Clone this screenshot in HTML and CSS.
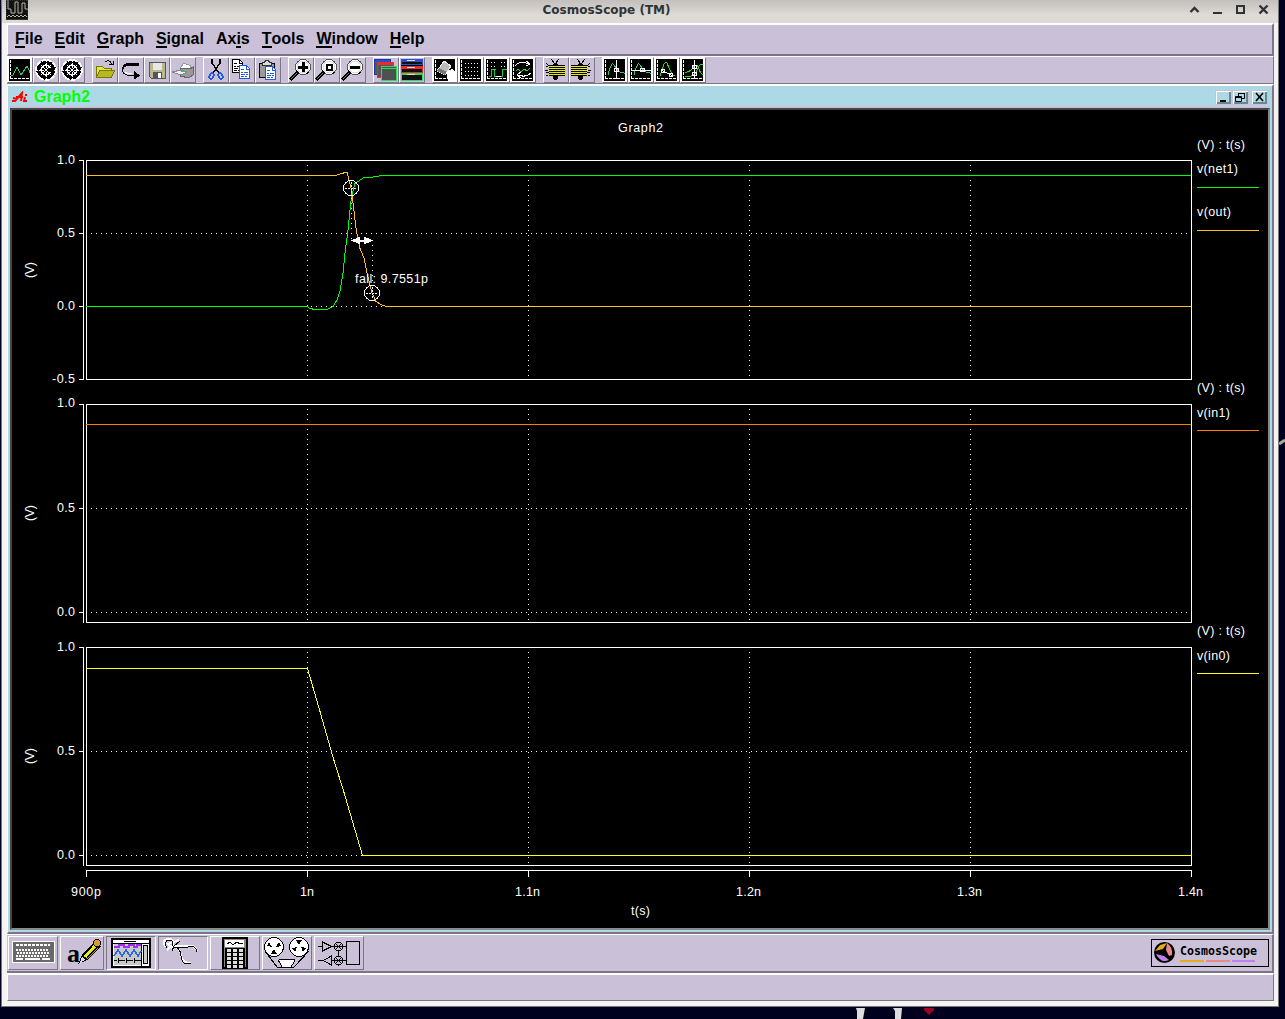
FILE: index.html
```html
<!DOCTYPE html>
<html lang="en">
<head>
<meta charset="utf-8">
<title>CosmosScope (TM)</title>
<link rel="stylesheet" href="styles.css">
</head>
<body>
<svg width="0" height="0" class="defs">
  <defs>
    <g id="scr"><path fill="#fff" d="M0 0h24v24H0z"/><path fill="#000" d="M1 1h21v22H1z"/><path d="M2.500 2v20M2 20.500h20" stroke="#fff" stroke-dasharray="3 1" fill="none"/></g>
    <g id="lens"><path d="M1 22L8 15" stroke="#000" stroke-width="3"/><path d="M2 21L8 15" stroke="#777"/><circle cx="14" cy="9" r="7.500" fill="#fff" stroke="#555"/><circle cx="14" cy="9" r="6" fill="none" stroke="#ddd"/><path d="M7 12l3 4M17 16l3-2" stroke="#000"/></g>
    <g id="bug" stroke="#000" fill="none"><path d="M7 1l4 5M15 1l-4 5M2 5l4 4M2 8h5M1 12h6M2 14h5M2 18l5-3M4 7l4 3"/><ellipse cx="11.500" cy="13.500" rx="3" ry="8" fill="#000"/><path d="M5 7h16v11H5z" fill="#000" stroke="none"/><path d="M4 8.500h17M5 10.500h16M4 12.500h17M5 14.500h16M4 16.500h17" stroke="#e8e820"/></g>
    <g id="polar"><circle cx="12" cy="12" r="10" fill="#000" stroke="#fff" stroke-width="2" stroke-dasharray="5 1"/><path d="M12 2v20M2 12h20M5 5l14 14M19 5L5 19" stroke="#fff" stroke-dasharray="2 1"/><circle cx="12" cy="12" r="5" fill="none" stroke="#fff" stroke-width="1.500"/></g>
    <g id="page"><path d="M.5.500h7l3 3v10H.5z" fill="#fff" stroke="currentColor"/><path d="M7.500 1v3h3M2 4.500h3M2 7.500h2m1 0h4M2 9.500h4m1 0h2M2 11.500h3m1 0h2" stroke="currentColor" fill="none"/></g>
    <g id="target" fill="none" stroke="#fff"><circle r="7.500"/><path d="M-6 .5H6M.5-6V6" stroke-dasharray="2 1"/></g>
  </defs>
</svg>
<div class="desktop">
<div class="window">
  <header class="titlebar">
    <svg class="appicon" width="22" height="20"><path d="M0 0h22v20H0z" fill="#111"/><path d="M2 0v9h3v4h4V2h3v11h4V3h3v6h3M1 17l2-2 2 2 2-2 2 2 2-2 2 2 2-2 2 2 2-2 2 2" fill="none" stroke="#b5b5a8" stroke-width="1"/><path d="M0 0h22v19.500H0z" fill="none" stroke="#555" stroke-dasharray="1 1"/></svg>
    <span class="caption">CosmosScope (TM)</span>
    <svg class="controls" width="84" height="20" fill="none" stroke="#2e3436" stroke-width="2"><path d="M5.500 12l4-4 4 4" stroke-width="2.400"/><path d="M28 13h9M52 6h7v7h-7z"/><path d="M74.500 5.500l8 8m0-8l-8 8" stroke-width="2.400"/></svg>
  </header>
  <div class="panels">
    <nav class="menubar"><span><u>F</u>ile</span><span><u>E</u>dit</span><span><u>G</u>raph</span><span><u>S</u>ignal</span><span>Ax<u>i</u>s</span><span><u>T</u>ools</span><span><u>W</u>indow</span><span><u>H</u>elp</span></nav>
    <div class="toolbar">
      <div class="group">
        <button><svg viewBox="0 0 24 24"><use href="#scr"/><path d="M3 17h2l4-8 4 8 4-6 2-3 2 4v3" fill="none" stroke="#30d060"/></svg></button>
        <button><svg viewBox="0 0 24 24"><use href="#polar"/><path d="M12 12l8-4v7z"/></svg></button>
        <button><svg viewBox="0 0 24 24"><use href="#polar"/></svg></button>
      </div>
      <div class="group">
        <button><svg viewBox="0 0 24 24"><path d="M12 4q4-3 7 2m-3 0h4V3" stroke="#000" fill="none"/><path d="M3.500 19.500v-11h6l2 2h7v3" fill="#e5e548" stroke="#777700"/><path d="M3.500 19.500l3-7h15l-3 7z" fill="#b8b820" stroke="#777700"/></svg></button>
        <button><svg viewBox="0 0 24 24"><path d="M20 6.500H9Q3.500 7 3.500 11.500q0 5.500 7 6h8" fill="none" stroke="#000"/><path d="M8 5h12v3H8Q5 9 4 12 2 7 8 5zM15 13l6 4.500-6 4z" fill="#000"/><path d="M6 14q2 2 7 2" stroke="#fff" fill="none"/></svg></button>
        <button><svg viewBox="0 0 24 24"><path d="M4.500 4.500h16v16H6.500l-2-2z" fill="#b8b890" stroke="#555"/><path d="M8 5h9v7H8z" fill="#e7e7e7"/><path d="M8 14h9v6H8z" fill="#555"/><path d="M13 15h3v5h-3z" fill="#fff"/></svg></button>
        <button><svg viewBox="0 0 24 24"><path d="M9 10l4-5 7 3-1 4" fill="#fff" stroke="#999"/><path d="M9 10l10 1 3-2v8l-4 3-9-2z" fill="#999" stroke="#666"/><path d="M1 14l9-2 6 2-6 3z" fill="#eee" stroke="#888"/><path d="M10 13h4" stroke="#20c080"/></svg></button>
      </div>
      <div class="group">
        <button><svg viewBox="0 0 24 24" fill="none"><path d="M8 1v4l7 10M16 1v4L9 15" stroke="#000" stroke-width="1.500"/><g stroke="#2058e0" stroke-width="1.800"><ellipse cx="7.500" cy="18" rx="2" ry="3" transform="rotate(30 7.500 18)"/><ellipse cx="16.500" cy="18" rx="2" ry="3" transform="rotate(-30 16.500 18)"/></g></svg></button>
        <button><svg viewBox="0 0 24 24"><use href="#page" x="2" y="1" color="#000"/><use href="#page" x="9" y="7" color="#2058e0"/></svg></button>
        <button><svg viewBox="0 0 24 24"><path d="M3.500 5.500h15v14h-15z" fill="#999" stroke="#000"/><path d="M6.500 7.500v-3h2l1-2h3l1 2h2v3z" fill="#ddd" stroke="#333"/><use href="#page" x="9" y="8" color="#2058e0"/></svg></button>
      </div>
      <div class="group">
        <button><svg viewBox="0 0 24 24"><use href="#lens"/><path d="M14 4v10M9 9h10" stroke="#000" stroke-width="3"/></svg></button>
        <button><svg viewBox="0 0 24 24"><use href="#lens"/><path d="M11.500 6.500h5v5h-5z" fill="none" stroke="#000" stroke-width="2"/></svg></button>
        <button><svg viewBox="0 0 24 24"><use href="#lens"/><path d="M9 9h10" stroke="#000" stroke-width="3"/></svg></button>
      </div>
      <div class="group">
        <button><svg viewBox="0 0 24 24"><path d="M.5 1.500h16v15H.5z" fill="#555" stroke="#2038a0"/><path d="M1 3h15" stroke="#2850c8" stroke-width="2"/><path d="M3.500 4.500h16v15h-16z" fill="#555" stroke="#f02828"/><path d="M4 6h15" stroke="#f02828" stroke-width="2"/><path d="M7.500 8.500h15v14h-15z" fill="#505050" stroke="#20e060"/><path d="M8 10h14" stroke="#20e060"/></svg></button>
        <button><svg viewBox="0 0 24 24"><path d="M1 1h22v22H1z"/><path d="M1.500 1.500h21v5h-21z" stroke="#2850c8" fill="#111"/><path d="M1 2.500h22" stroke="#2850c8" stroke-width="2"/><path d="M1.500 8.500h21v6h-21z" stroke="#f02828" fill="#111"/><path d="M1 9.500h22" stroke="#f02828" stroke-width="2"/><path d="M1.500 15.500h21v7h-21z" stroke="#20e060" fill="#111"/><path d="M1 16.500h22" stroke="#20e060"/><path d="M7 2.500h8M7 9.500h8M7 16.500h8" stroke="#ddd"/></svg></button>
      </div>
      <div class="group">
        <button><svg viewBox="0 0 24 24"><use href="#scr"/><path d="M11 3l7 5-6 9-8-4z" fill="#bbb" stroke="#eee"/><path d="M4 13l8 4 2-3-8-4z" fill="#777"/><path d="M13 14l6-3 4 4v8h-8z" fill="#fff"/></svg></button>
        <button><svg viewBox="0 0 24 24"><use href="#scr"/><path d="M6 5.500h15M6 9.500h15M6 13.500h15M6 17.500h15" stroke="#fff" stroke-dasharray="1 2"/></svg></button>
        <button><svg viewBox="0 0 24 24"><use href="#scr"/><path d="M6 4.500h5m5 0h5M6 8.500h5m5 0h5" stroke="#fff" stroke-dasharray="1 2"/><path d="M4 18.500h2v-7h5M17 11.500h5" stroke="#20d040" fill="none"/><path d="M9.500 11v7.500h8V11" stroke="#20d040" fill="none"/><path d="M11 18.500h5" stroke="#fff"/></svg></button>
        <button><svg viewBox="0 0 24 24"><use href="#scr"/><path d="M4 8q5-6 14-2m-3-3l4 3-4 2M20 15q-5 5-13 2m3-3l-4 3 4 3" stroke="#fff" fill="none"/><path d="M5 13l2-2 3 3 3-3 3 2 3-3" stroke="#20e020" fill="none"/></svg></button>
      </div>
      <div class="group">
        <button><svg viewBox="0 0 24 24"><use href="#bug"/></svg></button>
        <button><svg viewBox="0 0 24 24"><use href="#bug" transform="translate(22 0) scale(-1 1)"/></svg></button>
      </div>
      <div class="group">
        <button><svg viewBox="0 0 24 24"><use href="#scr"/><path d="M5 17q3-12 5-11c2 0 3 10 12 9" stroke="#30d070" fill="none"/><path d="M13.500 2v19" stroke="#fff"/><circle cx="13.500" cy="12" r="2" fill="none" stroke="#fff"/></svg></button>
        <button><svg viewBox="0 0 24 24"><use href="#scr"/><path d="M5 17q3-12 5-11c2 0 3 10 12 9" stroke="#30d070" fill="none"/><path d="M2 12.500h20" stroke="#fff"/><circle cx="13.500" cy="12" r="2" fill="none" stroke="#fff"/></svg></button>
        <button><svg viewBox="0 0 24 24"><use href="#scr"/><path d="M5 18q4-14 6-14c2 0 3 12 9 14" stroke="#20e020" fill="none"/><path d="M6 12l12 6" stroke="#fff"/><circle cx="8" cy="13" r="2" fill="none" stroke="#fff"/><circle cx="16" cy="17" r="2" fill="none" stroke="#fff"/></svg></button>
        <button><svg viewBox="0 0 24 24"><use href="#scr"/><path d="M4 14q5 1 9-6 3-3 5 3t4 5M4 18q9 2 12-6t6-5" stroke="#20e020" fill="none"/><path d="M13.500 2v19" stroke="#fff"/><circle cx="13.500" cy="9" r="2" fill="none" stroke="#fff"/><circle cx="13.500" cy="16" r="2" fill="none" stroke="#fff"/></svg></button>
      </div>
    </div>
    <section class="graphwin">
      <div class="graphtitle">
        <svg class="ai" width="18" height="12" fill="none" stroke="#f00" stroke-width="2"><path d="M1 10h3l7-8-1 8M5 6h7M2 7l4 1M14 4h2M14 6l-1 4h3"/></svg>
        <span>Graph2</span>
        <div class="mdi">
          <button><svg width="13" height="11"><path d="M3 9h6" stroke="#000" stroke-width="2"/></svg></button>
          <button><svg width="13" height="11" fill="none" stroke="#000"><path d="M4.500 4V1.500h6v5H8M4 1.500h7M1.500 4.500h6v5h-6zM1 5.500h7"/></svg></button>
          <button class="close"><svg width="13" height="11"><path d="M3 1l7 8M10 1L3 9" stroke="#000" stroke-width="1.600"/></svg></button>
        </div>
      </div>
      <svg class="plot" viewBox="12 110 1256 818" width="1256" height="818">
        <g class="grid">
          <path d="M86 233.500H1191M86 306.500H1191M86 508.500H1191M86 612.500H1191M86 751.500H1191M86 855.500H1191"/>
          <path d="M307.500 165V379M528.500 165V379M749.500 165V379M970.500 165V379M307.500 409V622M528.500 409V622M749.500 409V622M970.500 409V622M307.500 652V865M528.500 652V865M749.500 652V865M970.500 652V865"/>
        </g>
        <g class="frame">
          <path d="M86.500 160.500h1105v219h-1105zM86.500 404.500h1105v218h-1105zM86.500 647.500h1105v218h-1105z"/>
          <path d="M79 160.500h4.500v219H79M79 233.500h4M79 306.500h4M79 404.500h4.500v218M79 508.500h4M79 612.500h4M79 647.500h4.500v218M79 751.500h4M79 855.500h4"/>
          <path d="M86.500 877v-6.500h1105v6.500M307.500 870v7M528.500 870v7M749.500 870v7M970.500 870v7"/>
        </g>
        <g class="wave">
          <path class="net1" d="M86 306.500H307L310 308.500 315 309.500H327L333 306.500 337 300 340 291.500 343 273 345 253 348 230 349.500 215 351.500 197 355 183.500 361 179.500 364 177.500 373 177 382 175.500H1191"/>
          <path class="out" d="M86 175.500H335L342 173.500 345 172.500H347L351 188 353.500 207 356.500 232 360 248.500 364 258 367.500 275 372 293 376 301.500 382 305 387 306.500H1191"/>
          <path class="in1" d="M86 424.500H1191"/>
          <path class="in0" d="M86 668.500H307.500L320 711.500 334 760.500 344 792.500 362.500 855.500H1191"/>
          <path class="net1" d="M1197 187.500h62"/><path class="out" d="M1197 230.500h62"/><path class="in1" d="M1197 430.500h62"/><path class="in0" d="M1197 673.500h62"/>
        </g>
        <path class="cursor" d="M351.500 198V241M372.500 240V285"/>
        <path d="M352 240.500h20" stroke="#fff"/><path d="M351 240.500l9-4v3h4v-3l9 4-9 4v-3h-4v3z" fill="#fff"/>
        <use href="#target" x="351" y="188"/><use href="#target" x="372" y="293"/>
        <g class="label">
          <text x="618" y="132" textLength="45">Graph2</text>
          <text x="355" y="283" textLength="73">fall: 9.7551p</text>
          <text x="57" y="164" textLength="18">1.0</text><text x="57" y="237" textLength="18">0.5</text><text x="57" y="310" textLength="18">0.0</text><text x="52" y="383" textLength="23">-0.5</text>
          <text x="57" y="407" textLength="18">1.0</text><text x="57" y="512" textLength="18">0.5</text><text x="57" y="616" textLength="18">0.0</text>
          <text x="57" y="651" textLength="18">1.0</text><text x="57" y="755" textLength="18">0.5</text><text x="57" y="859" textLength="18">0.0</text>
          <text transform="translate(34 278) rotate(-90)" textLength="16">(V)</text><text transform="translate(34 521) rotate(-90)" textLength="16">(V)</text><text transform="translate(34 764) rotate(-90)" textLength="16">(V)</text>
          <text x="71" y="896" textLength="30">900p</text><text x="300" y="896" textLength="14">1n</text><text x="515" y="896" textLength="25">1.1n</text><text x="736" y="896" textLength="25">1.2n</text><text x="957" y="896" textLength="25">1.3n</text><text x="1178" y="896" textLength="25">1.4n</text>
          <text x="631" y="915" textLength="19">t(s)</text>
          <text x="1197" y="149" textLength="48">(V) : t(s)</text><text x="1197" y="173" textLength="41">v(net1)</text><text x="1197" y="216" textLength="34">v(out)</text>
          <text x="1197" y="392" textLength="48">(V) : t(s)</text><text x="1197" y="417" textLength="33">v(in1)</text>
          <text x="1197" y="635" textLength="48">(V) : t(s)</text><text x="1197" y="660" textLength="33">v(in0)</text>
        </g>
      </svg>
    </section>
    <div class="toolbox">
      <button><svg width="48" height="32"><path d="M3.500 4.500h42v21h-42z" fill="#696969" stroke="#fff"/><g stroke="#fff" stroke-width="2"><path d="M7 8h34" stroke-dasharray="3 1"/><path d="M7 13h33M8 16h32M7 19h33" stroke-dasharray="2 1"/><path d="M7 22h7m2 0h15m2 0h8"/></g></svg></button>
      <button class="narrow"><svg width="42" height="32"><text x="6" y="25" class="glyph-a">a</text><path d="M17 27l4-9L34 4l6 5-14 14z" fill="#000"/><path d="M24 20L34 9" stroke="#e8e820" stroke-width="3"/><path d="M21 20l3 3-5 3z" fill="#ddd"/><circle cx="36" cy="6" r="3.500" fill="#e0982c" stroke="#000"/><path d="M26 22L37 11" stroke="#aa0"/></svg></button>
      <button class="pressed"><svg width="48" height="32"><path d="M4 1h40v30H4z"/><path d="M6 3h36v26H6z" fill="#fff"/><path d="M7 7h27v21H7z" fill="#c8c8c8"/><path d="M6 6.500h36M34.500 6v23M17 4.500h12" stroke="#000"/><path d="M36.500 8.500h4v18h-4z" fill="#ccc" stroke="#000"/><path d="M7 10h5V8h5v2h5V8h5v2h3V8h4" stroke="#a030e8" stroke-width="2" fill="none"/><path d="M7 19l4-6 4 6 4-6 4 6 4-6 4 6 3-5" stroke="#2868e8" stroke-width="1.500" fill="none"/><path d="M7 23.500h3m2 0h6m2 0h6m2 0h6M11.500 21v5M19.500 21v5M27.500 21v5" stroke="#000"/></svg></button>
      <button class="pressed"><svg width="48" height="32" fill="none"><path d="M7 10Q2 3 9 2q7 0 5 6l-6 5M15 13L9 7l11-4M12 9h15q9-2 11 5M15 9q6 2 7 9 1 8 10 8" stroke="#fff" stroke-width="2"/><path d="M8 11Q4 4 10 3q6 1 3 6M13 14l2-5 6-5M14 10h15q8-2 9 5M16 10q6 2 6 9 1 8 6 8l4-1" stroke="#000"/></svg></button>
      <button><svg width="48" height="32"><path d="M11 0h26v32H11z"/><path d="M13 2h22v28H13z" fill="#888"/><path d="M14 3h19v7H14z" fill="#fff"/><path d="M16 7l3-2 3 3 4-3 3 2 3-1" stroke="#000" fill="none"/><path d="M14 11h20v19H14z"/><g stroke="#ddd" stroke-width="3"><path d="M16 13.500h4m2 0h4m2 0h4M16 17.500h4m2 0h4m2 0h4M16 21.500h4m2 0h4m2 0h4M16 25.500h4m2 0h4m2 0h4M16 29h4m2 0h4m2 0h4"/></g></svg></button>
      <button><svg width="48" height="32"><path d="M2 14l12 16h17L46 14" fill="none" stroke="#000"/><circle cx="11" cy="10" r="9.500" fill="#fff" stroke="#000"/><circle cx="36" cy="10" r="9.500" fill="#fff" stroke="#000"/><path d="M11 12l3 5H8zM9 10L4 9l2-4zM13 10l5-1-2-4zM36 8l-3-5h6zM34 10l-5 1 3 4zM38 10l5 1-3 4z"/><path d="M15.500 23.500q0-1 2-1h12q3 0 2 2l-4 6h-8z" fill="#fff" stroke="#000"/></svg></button>
      <button><svg width="48" height="32" fill="none" stroke="#000"><path d="M3 9.500h4M7.500 5v9l9-4.500zM17 9.500h14M3 23.500h4M16.500 19v9L8 23.500zM17 23.500h14M23.500 14v5M31.500 4.500h13v23h-13zM20 6l7 7m0-7l-7 7M20 20l7 7m0-7l-7 7"/><circle cx="23.500" cy="9.500" r="4.500"/><circle cx="23.500" cy="23.500" r="4.500"/></svg></button>
      <div class="brand"><svg width="116" height="26"><circle cx="12.500" cy="12.500" r="10.500"/><path d="M3 11l5-6 7-2-4 6z" fill="#e5aa20"/><path d="M15 3q6 4 5 12l-3 1-3-6z" fill="#e88888"/><path d="M4 14l8 2 5 4q-8 4-13-6z" fill="#c080f0"/><text x="28" y="15" textLength="77" lengthAdjust="spacingAndGlyphs">CosmosScope</text><path d="M28 21h24" stroke="#e5aa20" stroke-width="2"/><path d="M54 21h24" stroke="#e88888" stroke-width="2"/><path d="M80 21h23" stroke="#c080f0" stroke-width="2"/></svg></div>
    </div>
    <div class="status"></div>
  </div>
</div>
<svg class="wallpaper" width="1285" height="12"><path d="M856 1h9l-2 11h-6v-8zM893 1h9l-1 11h-6v-8z" fill="#ddd"/><path d="M924 1h10v2l-5 5-5-5z" fill="#a00028"/></svg>
<svg class="streak" width="6" height="10"><path d="M0 7l6-4" stroke="#aaa898" stroke-width="3"/></svg>
</div>
</body>
</html>
```
FILE: styles.css
```css
* { box-sizing: border-box; }
body { margin: 0; background: #00001e; overflow: hidden; }
button { margin: 0; padding: 0; font: inherit; color: #000; }
svg { display: block; flex: none; }
.defs { position: absolute; }
.desktop { position: relative; width: 1285px; height: 1019px; background: #00001e; }
.window { width: 1278px; height: 1007px; margin-left: 1px; background: #f5f4f2; border: solid #77777a; border-width: 0 1px 1px; display: flex; flex-direction: column; }
.titlebar { height: 23px; flex: none; display: flex; align-items: flex-start; background: linear-gradient(#c2bfbc, #dedad6 65%); padding-left: 4px; }
.caption { flex: 1; text-align: center; font: bold 12px/20px "DejaVu Sans", sans-serif; color: #2e3436; padding-right: 0; letter-spacing: -.01px; }
.controls { margin-right: 9px; }
.panels { width: 1267px; margin-left: 5px; display: flex; flex-direction: column; }
.menubar { height: 33px; border: solid; border-width: 2px 2px 2px 1px; border-color: #fff #7d7585 #7d7585 #fff; background: #cac0d8; display: flex; gap: 12px; padding: 4px 0 0 7px; font: bold 16px/20px "Liberation Sans", sans-serif; }
.menubar u { text-decoration: none; display: inline-block; height: 19px; border-bottom: 2px solid #000; line-height: 20px; }
.toolbar { height: 28px; border: solid; border-width: 1px 1px 1px 0; border-color: #fff #7d7585 #7d7585; background: #cac0d8; display: flex; gap: 7px; }
.group { display: flex; }
.group button { width: 26px; height: 26px; border: 1px solid; border-color: #fff #7d7585 #7d7585 #fff; background: #cac0d8; }
.group svg { width: 24px; height: 24px; shape-rendering: crispEdges; }
.graphwin { height: 850px; border: solid; border-width: 2px 2px 2px 1px; border-color: #fff #7d7585 #7d7585 #fff; background: #add8e6; }
.graphtitle { height: 20px; display: flex; align-items: center; font: bold 16px/20px "Liberation Sans", sans-serif; color: #0f0; padding-left: 3px; }
.graphtitle span { margin-left: 5px; padding-top: 2px; }
.ai { margin-top: 1px; }
.mdi { margin-left: auto; margin-right: 4px; display: flex; padding-top: 2px; }
.mdi button { width: 17px; height: 15px; border: 1px solid #cac0d8; background: #add8e6; box-shadow: inset 1px 1px #fff, inset -2px -2px #6e858c; padding: 1px; }
.mdi .close { margin-left: 2px; }
.plot { background: #000; border: 2px solid; border-color: #45454a #888 #888 #45454a; width: 1260px; height: 822px; margin-left: 2px; box-shadow: 0 -2px #cac0d8; margin-top: 2px; shape-rendering: crispEdges; }
.grid path { fill: none; stroke: #fff; stroke-dasharray: 1 4; }
.frame path { fill: none; stroke: #fff; }
.wave path { fill: none; stroke-width: 1; }
.wave .net1 { stroke: #00ff00; }
.wave .out { stroke: #ffc020; }
.wave .in1 { stroke: #ff8000; }
.wave .in0 { stroke: #ffff20; }
.cursor { stroke: #fff; stroke-dasharray: 1 4; }
.label { fill: #fff; font: 12.5px "Liberation Sans", sans-serif; }
.toolbox { height: 39px; display: flex; align-items: flex-start; gap: 2px; border: solid; border-width: 1px 2px 2px 0; border-color: #fff #7d7585 #7d7585; background: #cac0d8; padding: 1px 3px 0 1px; }
.toolbox button { width: 50px; height: 34px; border: 1px solid; border-color: #fff #7d7585 #7d7585 #fff; background: #cac0d8; }
.toolbox button svg { shape-rendering: crispEdges; }
.toolbox .narrow { width: 44px; }
.toolbox .pressed { border-color: #7d7585 #fff #fff #7d7585; }
.glyph-a { font: bold 26px "Liberation Serif", serif; }
.brand { width: 118px; height: 28px; border: 1px solid #000; margin: 3px 0 0 auto; font: bold 12px "DejaVu Sans Mono", monospace; }
.status { height: 28px; border: solid; border-width: 2px 1px 1px; border-color: #fff #7d7585 #7d7585 #fff; background: #cac0d8; }
.wallpaper { position: absolute; left: 0; top: 1007px; }
.streak { position: absolute; right: 0; top: 437px; }
```
